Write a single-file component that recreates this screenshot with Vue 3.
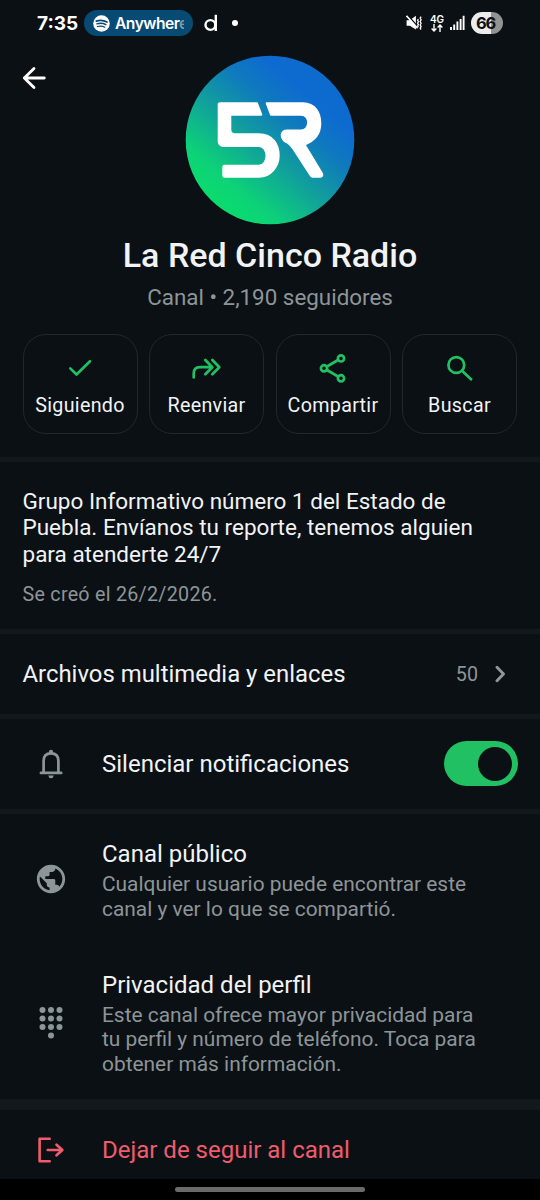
<script setup>
const dots = [[7, 6], [15.5, 6], [24, 6], [7, 14.5], [15.5, 14.5], [24, 14.5], [7, 23], [15.5, 23], [24, 23], [15.5, 31.5]]
</script>

<template>
  <div class="screen">
    <div class="status">
      <span class="time">7:35</span>
      <span class="pill">
        <svg width="17" height="17" viewBox="0 0 17 17">
          <circle cx="8.5" cy="8.5" r="8.3" fill="#fff" />
          <g fill="none" stroke="#074a73" stroke-linecap="round">
            <path d="M3.3 6.1Q9 4.2 14 7" stroke-width="1.7" />
            <path d="M3.9 8.9Q8.7 7.4 12.9 9.7" stroke-width="1.4" />
            <path d="M4.4 11.5Q8.3 10.3 11.8 12.2" stroke-width="1.2" />
          </g>
        </svg>
        <span class="song">Anywher<i>e</i></span>
      </span>
      <svg class="dlogo" width="14" height="18" viewBox="0 0 14 18">
        <g fill="none" stroke="#fff" stroke-width="2.4"><circle cx="6.4" cy="11" r="4.9" /><path d="M11.8 .8V17" /></g>
      </svg>
      <span class="bullet"></span>
      <span class="grow"></span>
      <svg class="mute" width="17" height="16" viewBox="0 0 17 16">
        <path d="M.6 5.3h3.2L9.9.8v13.8L3.8 10.7H.6z" fill="#fff" />
        <path d="M1.2-.2 11.5 11.3" stroke="#0b1014" stroke-width="1.6" />
        <path d="M.5.9 11.6 13.2" stroke="#fff" stroke-width="1.6" />
        <path d="M12.4 4.2l-.8 1.200 .8 1.400-.8 1.400 .8 1.400-.8 1.400 .8 1.200M15.1 1.600l-.9 1.500.9 1.700-.9 1.700.9 1.700-.9 1.700.9 1.700-.9 1.700.9 1.200" fill="none" stroke="#fff" stroke-width="1.300" />
      </svg>
      <span class="net">
        <b>4G</b>
        <svg width="12" height="8" viewBox="0 0 12 8"><path d="M3 0v7M.6 4.6 3 7l2.400-2.400M9 8V1M6.600 3.400 9 1l2.400 2.400" fill="none" stroke="#fff" stroke-width="1.400" /></svg>
      </span>
      <svg class="signal" width="15" height="16" viewBox="0 0 15 16">
        <path d="M1 15v-3M4.200 15V9.500M7.400 15V6.500M10.600 15V4M13.600 15V.8" stroke="#fff" stroke-width="1.900" />
      </svg>
      <span class="battery">66</span>
    </div>

    <header class="hero">
      <svg class="back" width="24" height="24" viewBox="0 0 24 24"><path d="M22.300 12H2.300M12 2.400 2.300 12l9.700 9.600" fill="none" stroke="#fff" stroke-width="2.800" stroke-linecap="round" stroke-linejoin="round" /></svg>
      <svg class="avatar" width="170" height="170" viewBox="0 0 170 170">
        <defs>
          <linearGradient id="brand" x1="27" y1="143" x2="118" y2="36" gradientUnits="userSpaceOnUse">
            <stop offset="0" stop-color="#0bdb6e" /><stop offset=".16" stop-color="#0dd277" /><stop offset=".5" stop-color="#119f9c" /><stop offset=".78" stop-color="#0f7abd" /><stop offset="1" stop-color="#0d6bd0" />
          </linearGradient>
        </defs>
        <circle cx="85" cy="85" r="84.300" fill="url(#brand)" />
        <g fill="#fff" stroke="#fff" stroke-width="2" stroke-linejoin="round">
          <path d="M34.500 48.300H72L76.300 59.700H45.300V74.500Q45.300 79.300 50 79.300H74C88 79.300 93.700 90 93.700 100.500S86 121.700 74 121.700H39.500Q38.300 121.700 38.300 120.500V112Q38.300 110.700 39.500 110.700H74C84 110.700 84 91 74 91H38Q33.700 90 33.700 86.500V49z" />
          <path d="M81.700 48.300H118C130 48.300 135.300 58 135.300 68.500C135.300 78 130 85.500 119.500 89.500L137 118.500Q138 121.700 135.500 121.700H127.500Q126.500 121.700 126 121L108.500 94Q105 88.500 99.500 86Q96.700 83.500 96.700 79.500Q97.500 75.500 102 75.500H116C125.500 75.500 125.500 59.700 116 59.700H86z" />
        </g>
      </svg>
      <h1>La Red Cinco Radio</h1>
      <p class="followers">Canal • 2,190 seguidores</p>
      <div class="actions">
        <button class="action">
          <svg width="34" height="34" viewBox="0 0 34 34"><path d="M7.300 17.400l6.200 6.100L27 10.300" /></svg>
          <span>Siguiendo</span>
        </button>
        <button class="action">
          <svg width="34" height="34" viewBox="0 0 34 34"><path d="M3.700 26.500V22.500Q3.700 16.200 10 16.200H20.500M15.300 9l7 7.200-7 7M22.300 9l7 7.200-7 7" /></svg>
          <span>Reenviar</span>
        </button>
        <button class="action">
          <svg width="34" height="34" viewBox="0 0 34 34"><path d="M11 15.500 22 9M11 19 22 25.500" /><circle cx="8" cy="17.300" r="3.100" /><circle cx="25" cy="7.400" r="3.100" /><circle cx="25" cy="27.300" r="3.100" /></svg>
          <span>Compartir</span>
        </button>
        <button class="action">
          <svg width="34" height="34" viewBox="0 0 34 34"><circle cx="13.300" cy="14" r="7.900" /><path d="M19 19.700 28 28.300" /></svg>
          <span>Buscar</span>
        </button>
      </div>
    </header>

    <section class="about">
      <p class="desc">Grupo Informativo número 1 del Estado de<br />Puebla. Envíanos tu reporte, tenemos alguien<br />para atenderte 24/7</p>
      <p class="created">Se creó el 26/2/2026.</p>
    </section>

    <section class="row media">
      <span class="label">Archivos multimedia y enlaces</span>
      <span class="count">50</span>
      <svg width="12" height="18" viewBox="0 0 12 18"><path d="M2 2.300 8.500 9 2 15.700" fill="none" stroke="#92979a" stroke-width="2.900" stroke-linecap="round" stroke-linejoin="round" /></svg>
    </section>

    <section class="row silence">
      <svg class="icon" width="32" height="32" viewBox="0 0 32 32">
        <path d="M5.900 24.900H26.200" stroke="#8d9598" stroke-width="2.700" stroke-linecap="round" />
        <path d="M8.600 24.500V13Q8.600 5.400 16 5.400T23.400 13V24.500" fill="none" stroke="#8d9598" stroke-width="2.700" />
        <circle cx="16" cy="3.900" r="2.100" fill="#8d9598" /><path d="M13.200 27.500h5.600q-.5 2.700-2.800 2.700t-2.800-2.700z" fill="#8d9598" />
      </svg>
      <span class="label">Silenciar notificaciones</span>
      <span class="toggle"><i></i></span>
    </section>

    <section class="info">
      <div class="item public">
        <svg class="icon" width="34" height="34" viewBox="0 0 24 24"><path fill="#8d9598" d="M12 2C6.480 2 2 6.480 2 12s4.480 10 10 10 10-4.480 10-10S17.520 2 12 2zm-1 17.930c-3.950-.490-7-3.850-7-7.930 0-.620.080-1.210.210-1.790L9 15v1c0 1.100.9 2 2 2v1.930zm6.900-2.540c-.26-.81-1-1.390-1.900-1.390h-1v-3c0-.55-.45-1-1-1H8v-2h2c.55 0 1-.45 1-1V7h2c1.100 0 2-.9 2-2v-.41c2.930 1.190 5 4.060 5 7.410 0 2.080-.8 3.970-2.100 5.390z" /></svg>
        <div><h2>Canal público</h2><p>Cualquier usuario puede encontrar este<br />canal y ver lo que se compartió.</p></div>
      </div>
      <div class="item privacy">
        <svg class="icon" width="34" height="36" viewBox="0 0 34 36"><circle v-for="(d, i) in dots" :key="i" :cx="d[0] + 1.5" :cy="d[1]" r="3" fill="#8d9598" /></svg>
        <div><h2>Privacidad del perfil</h2><p>Este canal ofrece mayor privacidad para<br />tu perfil y número de teléfono. Toca para<br />obtener más información.</p></div>
      </div>
    </section>

    <section class="row leave">
      <svg class="icon" width="32" height="32" viewBox="0 0 32 32"><path d="M14.700 4.700H4.600V27.300H14.700M12.700 16H27.200M21.500 10.700 27.400 16l-5.900 5.300" fill="none" stroke="#f15c6d" stroke-width="2.600" stroke-linecap="round" stroke-linejoin="round" /></svg>
      <span class="label">Dejar de seguir al canal</span>
    </section>
    <footer class="nav"><span></span></footer>
  </div>
</template>

<style>
body { margin: 0; background: #0b1014; }
</style>

<style scoped>
* { box-sizing: border-box; }
.screen { width: 540px; height: 1200px; overflow: hidden; display: flex; flex-direction: column; background: #0b1014; color: #f1f3f4; font-family: Roboto, "Noto Sans", sans-serif; font-size: 22.5px; }
h1, h2, p { margin: 0; font-weight: 400; white-space: nowrap; }
.status { height: 46px; flex: none; display: flex; align-items: center; padding: 0 37px; color: #fff; font-family: Inter, sans-serif; }
.time { width: 47px; font-size: 19px; font-weight: 650; }
.pill { width: 109px; height: 26px; border-radius: 13px; background: #074a73; display: flex; align-items: center; padding-left: 9px; gap: 5px; overflow: hidden; }
.song { font-size: 15.600px; font-weight: 600; letter-spacing: -.5px; width: 68.500px; overflow: hidden; white-space: nowrap; }
.song i { font-style: normal; opacity: .45; }
.dlogo { margin: -1px 0 0 11px; }
.bullet { width: 6px; height: 6px; border-radius: 50%; background: #fff; margin-left: 14px; }
.grow { flex: 1; }
.mute { margin-right: 7px; }
.net { width: 14px; display: flex; flex-direction: column; align-items: center; margin-right: 6px; }
.net b { font-size: 10px; line-height: 9px; font-weight: 600; }
.signal { margin-right: 6px; }
.battery { width: 32px; height: 22px; border-radius: 11px; padding-left: 5px; font-size: 16.500px; line-height: 22px; font-weight: 650; letter-spacing: -1.200px; color: #0b1014; background: linear-gradient(90deg, #ececec 64%, #929292 64%); }
.hero { height: 416px; flex: none; border-bottom: 5px solid #12181c; display: flex; flex-direction: column; align-items: center; position: relative; padding-top: 9px; }
.back { position: absolute; left: 22px; top: 20px; }
.avatar { flex: none; }
h1 { font-size: 34px; line-height: 40px; font-weight: 500; margin-top: 10px; }
.followers { font-size: 22.400px; line-height: 26px; margin-top: 9px; color: #8d9598; }
.actions { align-self: stretch; display: grid; grid-template-columns: repeat(4, 115px); gap: 11.500px; padding-left: 22.500px; margin-top: 24px; }
.action { height: 100px; padding: 17px 0 0; border: 1.500px solid #21272b; border-radius: 23px; background: none; color: inherit; font: 400 19.700px/24px Roboto, sans-serif; letter-spacing: .3px; display: flex; flex-direction: column; align-items: center; gap: 9px; }
.action svg { fill: none; stroke: #21c063; stroke-width: 2.700; stroke-linecap: round; stroke-linejoin: round; flex: none; margin-top: -1px; }
.about { height: 172px; flex: none; padding: 26px 22.500px 0; border-bottom: 5px solid #12181c; }
.desc { line-height: 26.400px; }
.created { font-size: 19.700px; line-height: 24px; margin-top: 15.500px; color: #8d9598; letter-spacing: .27px; }
.row { display: flex; align-items: center; flex: none; }
.label { white-space: nowrap; font-size: 24px; }
.media { height: 85px; padding: 0 33px 0 22.500px; border-bottom: 5px solid #12181c; }
.media .label { flex: 1; font-size: 23.900px; }
.count { font-size: 19.700px; color: #8d9598; margin-right: 17px; }
.silence { height: 95px; padding: 0 22px 1px 35px; border-bottom: 5px solid #12181c; }
.silence .label { flex: 1; margin-left: 35px; }
.toggle { width: 74px; height: 45px; border-radius: 23px; background: #21c063; padding: 5.500px 6px; display: flex; justify-content: flex-end; }
.toggle i { width: 34px; height: 34px; border-radius: 50%; background: #0b1014; }
.info { height: 296px; flex: none; padding: 26px 0 0 34px; border-bottom: 11px solid #12181c; }
.item { display: flex; }
.item .icon { width: 34px; flex: none; margin-right: 34px; }
.public { height: 130.500px; }
.public .icon { margin-top: 22px; }
.privacy .icon { margin-top: 33px; }
h2 { font-size: 24px; line-height: 28px; }
.item p { font-size: 20.900px; line-height: 24.600px; margin-top: 4px; color: #8d9598; }
.leave { height: 69px; padding: 10px 0 0 35px; color: #f15c6d; }
.leave .label { margin-left: 35px; }
.nav { height: 21px; flex: none; background: #000; display: flex; justify-content: center; padding-top: 8px; }
.nav span { width: 190px; height: 5px; border-radius: 3px; background: #6b6b6b; }
</style>
